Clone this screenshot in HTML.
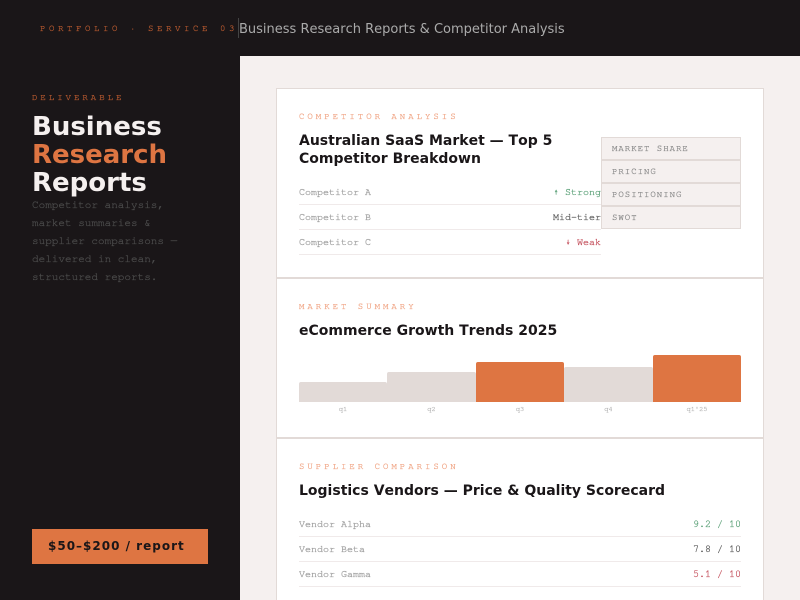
<!DOCTYPE html>
<html>
<head>
<meta charset="utf-8">
<style>
*{box-sizing:border-box;margin:0;padding:0}
html,body{width:800px;height:600px;overflow:hidden;background:#f5f0ef}
body{position:relative;font-family:"DejaVu Sans",sans-serif;font-kerning:none}
.m,.lab,.bl,.row,.tag{font-family:"FreeMono","Liberation Mono",monospace;-webkit-text-stroke:.25px}
.a{position:absolute;white-space:nowrap}
#top{left:0;top:0;width:800px;height:56px;background:#1a1618}
#side{left:0;top:56px;width:240px;height:544px;background:#1a1618}
.card{position:absolute;left:276px;width:488px;background:#fff;border:1px solid #e2dad7;border-top:none}
.lab{font-size:9px;letter-spacing:3px;color:#f0a585;line-height:11px}
.h{font-size:14px;font-weight:700;color:#1a1618;line-height:18px;white-space:normal}
.row{position:absolute;height:25px;border-bottom:1px solid #f0eaea;font-size:10px;line-height:25px;color:#999;display:flex;justify-content:space-between}
.tag{position:absolute;left:601px;width:140px;height:23px;background:#f5f0ef;border:1px solid #e2dad7;font-size:9px;letter-spacing:1px;line-height:21px;padding-left:10px;color:#888}
.bar{position:absolute;border-radius:2px 2px 0 0}
.bl{position:absolute;top:405px;font-size:7px;line-height:9px;color:#bbb;text-align:center}
</style>
</head>
<body>
<div class="a" id="top"></div>
<div class="a m" style="left:40px;top:23px;font-size:9px;letter-spacing:3.6px;line-height:12px;color:#b85a30">PORTFOLIO · SERVICE 03</div>
<div class="a" style="left:238px;top:18px;width:1px;height:20px;background:#444"></div>
<div class="a" style="left:239px;top:21px;font-size:13px;line-height:17px;color:#aaa">Business Research Reports &amp; Competitor Analysis</div>

<div class="a" id="side"></div>
<div class="a m" style="left:32px;top:92px;font-size:9px;letter-spacing:3px;line-height:11px;color:#b85a30">DELIVERABLE</div>
<div class="a" style="left:32px;top:113px;font-size:26px;font-weight:700;line-height:28px;color:#f5f0ef">Business<br><span style="color:#de7542">Research</span><br>Reports</div>
<div class="a m" style="left:32px;top:197px;font-size:11px;line-height:18px;color:#4d4d4d">Competitor analysis,<br>market summaries &amp;<br>supplier comparisons —<br>delivered in clean,<br>structured reports.</div>
<div class="a" style="left:32px;top:529px;width:176px;height:35px;background:#de7542;color:#1a1618;font-size:12px;font-weight:700;letter-spacing:1px;line-height:35px;padding-left:16px">$50–$200 / report</div>

<div class="card" style="top:88px;height:191px;border-top:1px solid #e2dad7;border-bottom:2px solid #e2dad7"></div>
<div class="card" style="top:279px;height:160px;border-bottom:2px solid #e2dad7"></div>
<div class="card" style="top:439px;height:161px;border-bottom:none"></div>

<div class="a lab" style="left:299px;top:111px">COMPETITOR ANALYSIS</div>
<div class="a h" style="left:299px;top:132px;width:280px">Australian SaaS Market — Top 5 Competitor Breakdown</div>
<div class="row" style="left:299px;top:180px;width:302px"><span>Competitor A</span><span style="color:#5aa077">↑ Strong</span></div>
<div class="row" style="left:299px;top:205px;width:302px"><span>Competitor B</span><span style="color:#555">Mid-tier</span></div>
<div class="row" style="left:299px;top:230px;width:302px"><span>Competitor C</span><span style="color:#c4505c">↓ Weak</span></div>
<div class="tag" style="top:137px">MARKET SHARE</div>
<div class="tag" style="top:160px">PRICING</div>
<div class="tag" style="top:183px">POSITIONING</div>
<div class="tag" style="top:206px">SWOT</div>

<div class="a lab" style="left:299px;top:301px">MARKET SUMMARY</div>
<div class="a h" style="left:299px;top:322px">eCommerce Growth Trends 2025</div>
<div class="bar" style="left:299px;top:382px;width:88px;height:20px;background:#e2dad7"></div>
<div class="bar" style="left:387px;top:372px;width:89px;height:30px;background:#e2dad7"></div>
<div class="bar" style="left:476px;top:362px;width:88px;height:40px;background:#de7542"></div>
<div class="bar" style="left:564px;top:367px;width:89px;height:35px;background:#e2dad7"></div>
<div class="bar" style="left:653px;top:355px;width:88px;height:47px;background:#de7542"></div>
<div class="bl" style="left:299px;width:88px">q1</div>
<div class="bl" style="left:387px;width:89px">q2</div>
<div class="bl" style="left:476px;width:88px">q3</div>
<div class="bl" style="left:564px;width:89px">q4</div>
<div class="bl" style="left:653px;width:88px">q1'25</div>

<div class="a lab" style="left:299px;top:461px">SUPPLIER COMPARISON</div>
<div class="a h" style="left:299px;top:482px">Logistics Vendors — Price &amp; Quality Scorecard</div>
<div class="row" style="left:299px;top:512px;width:442px"><span>Vendor Alpha</span><span style="color:#5aa077">9.2 / 10</span></div>
<div class="row" style="left:299px;top:537px;width:442px"><span>Vendor Beta</span><span style="color:#555">7.8 / 10</span></div>
<div class="row" style="left:299px;top:562px;width:442px"><span>Vendor Gamma</span><span style="color:#c4505c">5.1 / 10</span></div>
</body>
</html>
